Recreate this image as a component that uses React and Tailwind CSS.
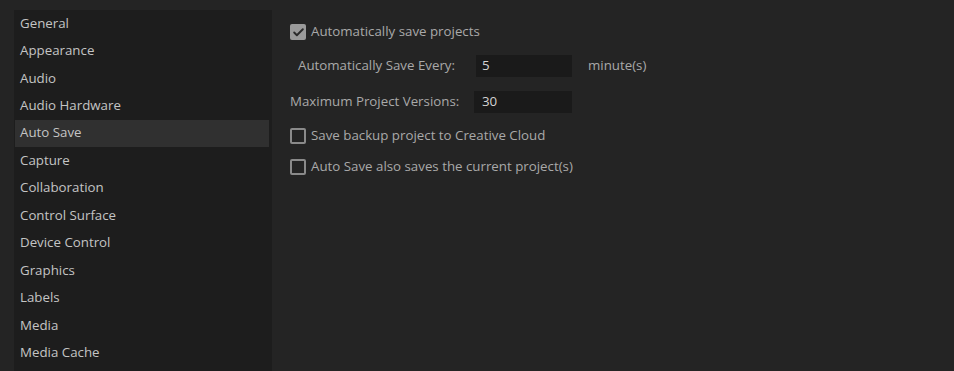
import { Check } from "lucide-react";

const sections = [
  "General",
  "Appearance",
  "Audio",
  "Audio Hardware",
  "Auto Save",
  "Capture",
  "Collaboration",
  "Control Surface",
  "Device Control",
  "Graphics",
  "Labels",
  "Media",
  "Media Cache",
];

function Checkbox({ checked, label }) {
  return (
    <div className="flex items-center gap-[5px] h-[16px]">
      <div
        className={
          checked
            ? "w-[16px] h-[16px] rounded-[2px] bg-[#9a9a9a] flex items-center justify-center"
            : "w-[16px] h-[16px] rounded-[2px] border-2 border-[#8a8a8a]"
        }
      >
        {checked && <Check size={13} strokeWidth={3.5} color="#2a2a2a" />}
      </div>
      <span className="text-[13.3px] text-[#a9a9a9]">{label}</span>
    </div>
  );
}

function App() {
  return (
    <div
      className="w-[954px] h-[371px] bg-[#242424] flex overflow-hidden"
      style={{ fontFamily: "'Open Sans', 'Liberation Sans', sans-serif" }}
    >
      <div className="ml-[14px] mt-[10px] w-[258px] bg-[#1d1d1d] -mb-[1px]">
        {sections.map((s) => (
          <div
            key={s}
            className={
              s === "Auto Save"
                ? "h-[27.5px] flex items-center pl-[6px] ml-[1px] mr-[3px] -mt-[0.5px] bg-[#303030] text-[13.3px] text-[#c4c4c4]"
                : "h-[27.5px] flex items-center pl-[6px] text-[13.3px] text-[#c4c4c4]"
            }
          >
            <span className={s === "Auto Save" ? "-ml-[1px]" : ""}>{s}</span>
          </div>
        ))}
      </div>

      <div className="pl-[18px] pt-[24px] flex flex-col">
        <Checkbox checked label="Automatically save projects" />

        <div className="flex items-center mt-[15px] h-[22px]">
          <span className="ml-[8px] w-[178px] text-[13.3px] text-[#a9a9a9]">
            Automatically Save Every:
          </span>
          <div className="w-[96px] h-[22px] bg-[#1a1a1a] flex items-center pl-[6px] text-[13.3px] text-[#d4d4d4]">
            5
          </div>
          <span className="ml-[16px] text-[13.3px] text-[#a9a9a9]">
            minute(s)
          </span>
        </div>

        <div className="flex items-center mt-[14px] h-[22px]">
          <span className="w-[184px] text-[13.3px] text-[#a9a9a9]">
            Maximum Project Versions:
          </span>
          <div className="w-[98px] h-[22px] bg-[#1a1a1a] flex items-center pl-[8px] text-[13.3px] text-[#d4d4d4]">
            30
          </div>
        </div>

        <div className="mt-[15px] flex flex-col gap-[15px]">
          <Checkbox label="Save backup project to Creative Cloud" />
          <Checkbox label="Auto Save also saves the current project(s)" />
        </div>
      </div>
    </div>
  );
}

export default App;
